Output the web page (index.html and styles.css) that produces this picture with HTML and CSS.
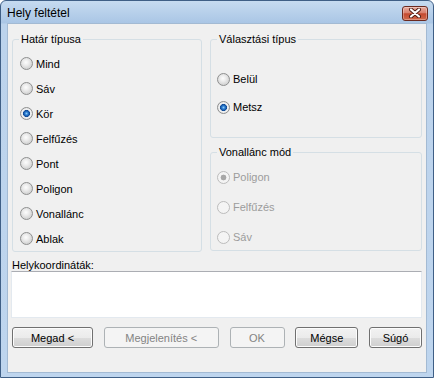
FILE: index.html
```html
<!DOCTYPE html>
<html lang="hu">
<head>
    <meta charset="UTF-8">
    <title>Hely feltétel</title>
    <link rel="stylesheet" href="styles.css">
</head>
<body>
    <div class="window">
        <div class="titlebar">
            <span class="title">Hely feltétel</span>
            <button class="close" title="Bezárás">
                <svg width="14" height="10" viewBox="0 0 14 10">
                    <path d="M3 1.5 L11 8.5 M11 1.5 L3 8.5" stroke="#4a1a12" stroke-width="4" stroke-linecap="round"/>
                    <path d="M3 1.5 L11 8.5 M11 1.5 L3 8.5" stroke="#fff" stroke-width="2.2" stroke-linecap="round"/>
                </svg>
            </button>
        </div>

        <div class="client">
            <div class="groups">
                <fieldset class="group group-left">
                    <legend>Határ típusa</legend>
                    <label class="radio"><input type="radio" name="hatar"> Mind</label>
                    <label class="radio"><input type="radio" name="hatar"> Sáv</label>
                    <label class="radio"><input type="radio" name="hatar" checked> Kör</label>
                    <label class="radio"><input type="radio" name="hatar"> Felfűzés</label>
                    <label class="radio"><input type="radio" name="hatar"> Pont</label>
                    <label class="radio"><input type="radio" name="hatar"> Poligon</label>
                    <label class="radio"><input type="radio" name="hatar"> Vonallánc</label>
                    <label class="radio"><input type="radio" name="hatar"> Ablak</label>
                </fieldset>

                <div class="right-col">
                    <fieldset class="group group-select">
                        <legend>Választási típus</legend>
                        <label class="radio"><input type="radio" name="valaszt"> Belül</label>
                        <label class="radio"><input type="radio" name="valaszt" checked> Metsz</label>
                    </fieldset>

                    <fieldset class="group group-mode" disabled>
                        <legend>Vonallánc mód</legend>
                        <label class="radio"><input type="radio" name="mod" checked> Poligon</label>
                        <label class="radio"><input type="radio" name="mod"> Felfűzés</label>
                        <label class="radio"><input type="radio" name="mod"> Sáv</label>
                    </fieldset>
                </div>
            </div>

            <label class="coords-label" for="coords">Helykoordináták:</label>
            <textarea id="coords" class="coords"></textarea>

            <div class="buttons">
                <button class="btn btn-megad">Megad &lt;</button>
                <button class="btn btn-show" disabled>Megjelenítés &lt;</button>
                <button class="btn btn-ok" disabled>OK</button>
                <button class="btn btn-cancel">Mégse</button>
                <button class="btn btn-help">Súgó</button>
            </div>
        </div>
    </div>
</body>
</html>
```

FILE: styles.css
```css
body {
    margin: 0;
    background: #ffffff;
    font-family: "Liberation Sans", Arial, sans-serif;
    font-size: 11px;
    color: #000;
}
.window {
    width: 434px;
    height: 378px;
    box-sizing: border-box;
    border: 1px solid #3f5f86;
    border-radius: 6px 6px 0 0;
    background: linear-gradient(#c6dbf0 0, #aac6e5 22px, #bcd3ec 23px, #bed5ee 100%);
    padding: 0 6px 4px 6px;
    display: flex;
    flex-direction: column;
}
.titlebar {
    height: 22px;
    display: flex;
    align-items: center;
    justify-content: space-between;
}
.title {
    font-size: 12px;
    padding-top: 2px;
}
.close {
    width: 26px;
    height: 15px;
    margin: 2px -1px 0 0;
    padding: 0;
    border: 1px solid #6b2a20;
    border-radius: 3px;
    background: linear-gradient(#e8ac9f 0, #d9806d 45%, #c4492f 52%, #d0694c 100%);
    box-shadow: inset 0 0 0 1px rgba(255,255,255,0.3);
    display: flex;
    align-items: center;
    justify-content: center;
}
.client {
    flex: 1;
    background: #f0f0f0;
    border: 1px solid #a3bad3;
    padding: 9px 4px 0 4px;
}
.groups {
    display: grid;
    grid-template-columns: 190px 212px;
    column-gap: 8px;
}
.group {
    margin: 0;
    border: 1px solid #d5dfe5;
    border-radius: 3px;
    padding: 0 0 0 6px;
    min-width: 0;
}
.group legend {
    padding: 0 2px;
    line-height: 13px;
    color: #000;
}
.group-left {
    padding-top: 5px;
}
.group-left .radio {
    height: 25px;
    padding-left: 1px;
}
.group-select {
    padding-top: 19px;
    padding-bottom: 16px;
}
.group-select .radio {
    height: 28px;
}
.group-mode {
    margin-top: 8px;
    padding-top: 5px;
    display: flex;
    flex-direction: column;
    gap: 4px;
}
.group-mode .radio {
    height: 26px;
}
.radio {
    display: flex;
    align-items: center;
}
.radio input {
    appearance: none;
    -webkit-appearance: none;
    width: 13px;
    height: 13px;
    margin: 0 3px 0 0;
    border: 1px solid #8e8f8f;
    border-radius: 50%;
    background: radial-gradient(circle at 45% 40%, #fdfdfd 0, #ececec 3px, #d6d6d6 6px);
    box-sizing: border-box;
}
.radio input:checked {
    background: radial-gradient(circle, #8ccdf6 0, #2a7ad0 1.6px, #0f4a96 3.2px, #e6e9ec 3.8px, #f4f4f4 4.6px, #d9d9d9 6px);
}
.group-mode .radio {
    color: #9c9c9c;
}
.group-mode .radio input {
    border-color: #bcbcbc;
    background: #f4f4f4;
}
.group-mode .radio input:checked {
    background: radial-gradient(circle, #a7a7a7 0, #a7a7a7 2.6px, #f4f4f4 3.2px);
}
.coords-label {
    display: block;
    margin-top: 7px;
    line-height: 12px;
}
.coords {
    display: block;
    width: 411px;
    height: 47px;
    margin: 0 0 0 -1px;
    box-sizing: border-box;
    border: 1px solid #e3e9ef;
    border-top-color: #abadb3;
    background: #fff;
    resize: none;
    outline: none;
}
.buttons {
    display: flex;
    justify-content: space-between;
    margin-top: 9px;
}
.btn {
    height: 21px;
    padding: 0;
    border: 1px solid #707070;
    border-radius: 3px;
    background: linear-gradient(#f2f2f2 0, #ebebeb 50%, #dddddd 51%, #cfcfcf 100%);
    box-shadow: inset 0 0 0 1px #fcfcfc;
    font-family: "Liberation Sans", Arial, sans-serif;
    font-size: 11px;
    color: #000;
}
.btn:disabled {
    border-color: #adb2b5;
    background: #f4f4f4;
    box-shadow: none;
    color: #838383;
}
.btn-megad { width: 81px; }
.btn-show { width: 115px; }
.btn-ok { width: 55px; }
.btn-cancel { width: 63px; }
.btn-help { width: 53px; }
```
